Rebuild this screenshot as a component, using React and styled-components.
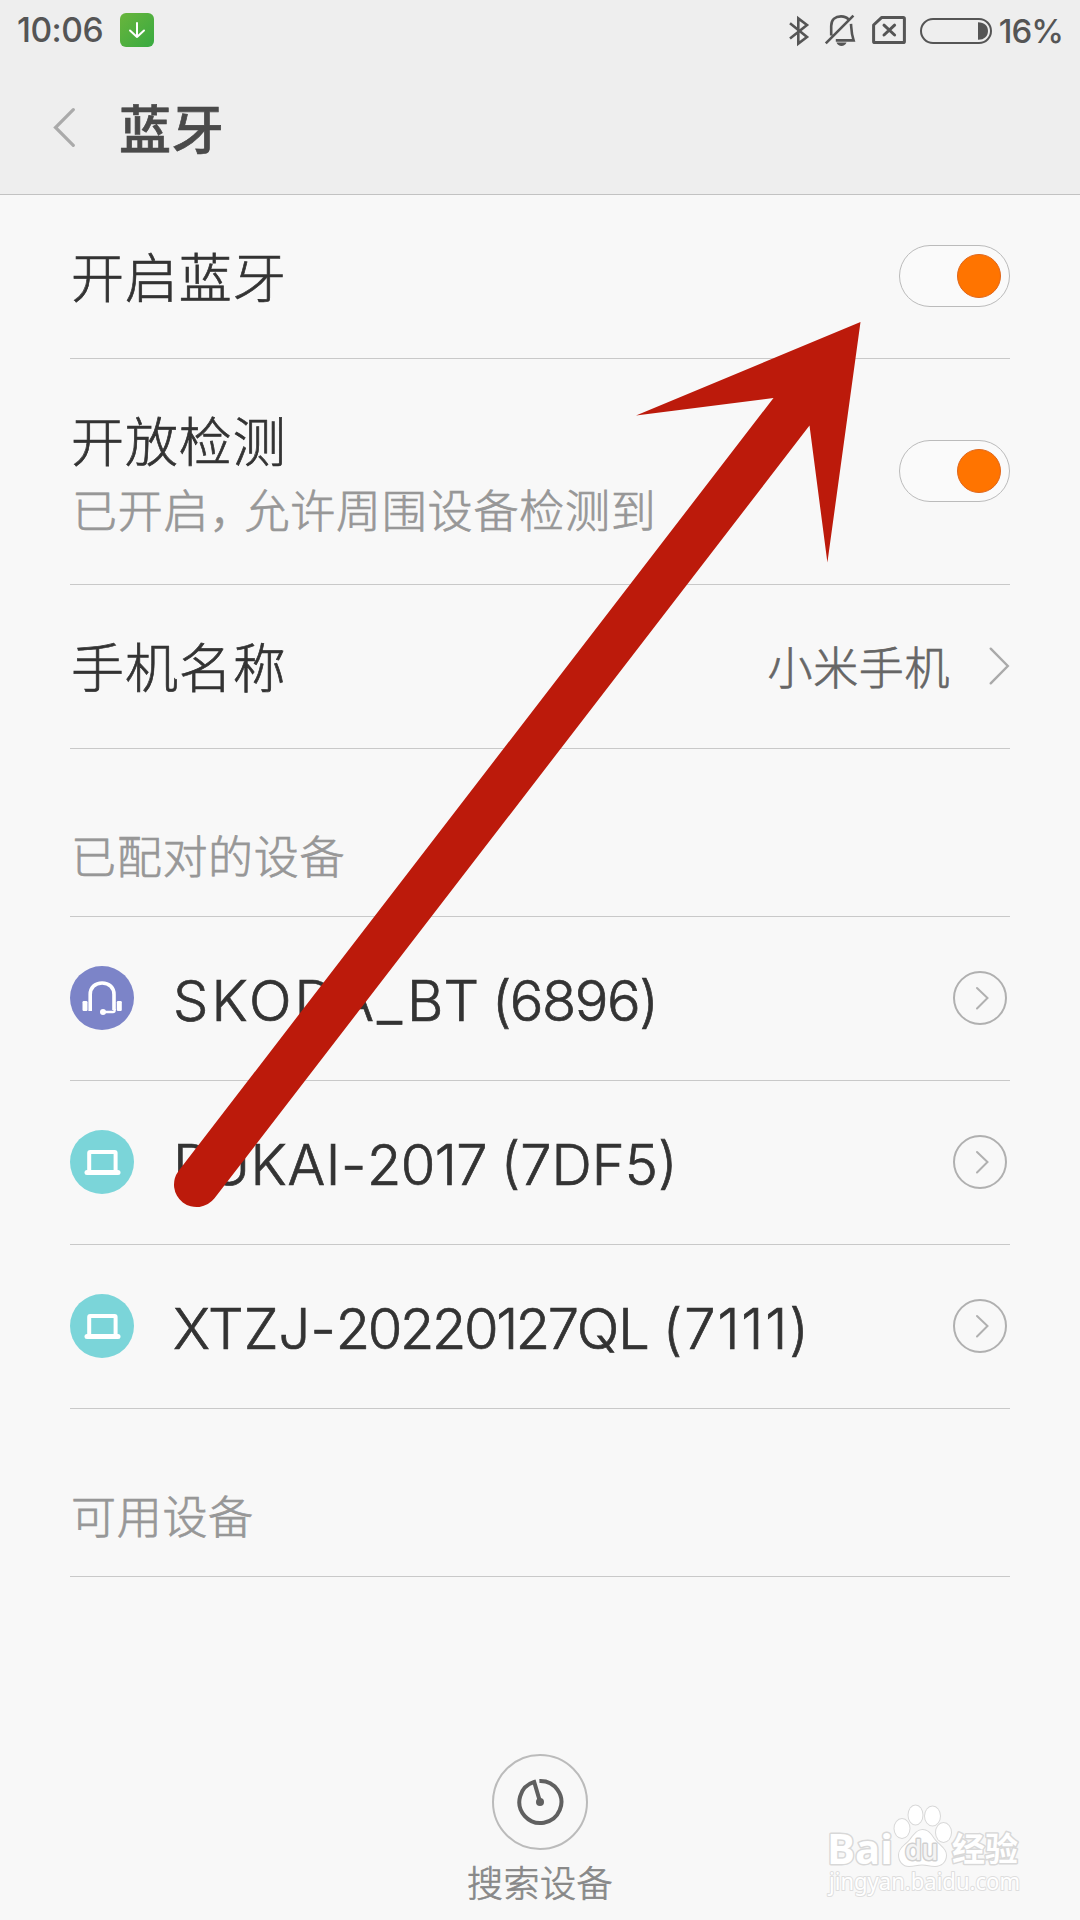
import React from 'react';
import styled, { createGlobalStyle } from 'styled-components';

const cjk = '"Noto Sans CJK SC", sans-serif';
const latin = 'Inter, "Noto Sans CJK SC", sans-serif';

const GlobalStyle = createGlobalStyle`
  * { box-sizing: border-box; }
  body { margin: 0; background: #f8f8f8; }
`;

const Screen = styled.div`
  position: relative;
  display: flex;
  flex-direction: column;
  width: 1080px;
  height: 1920px;
  overflow: hidden;
  background: #f8f8f8;
  font-family: ${cjk};
  font-weight: 300;
  -webkit-text-stroke: 0.7px currentColor;
  color: #333;
`;

const Header = styled.header`
  height: 195px;
  background: #eee;
  border-bottom: 1px solid #c2c2c2;
`;

const StatusBar = styled.div`
  display: flex;
  align-items: center;
  justify-content: space-between;
  height: 60px;
  padding: 0 17px 0 17px;
  font: 500 33.6px/60px ${latin};
  letter-spacing: -0.5px;
  -webkit-text-stroke: 0;
  color: #555;
`;

const StatusGroup = styled.div`
  display: flex;
  align-items: center;
  gap: ${p => p.$gap || 0}px;
`;

const Level = styled.span`
  padding-top: 1px;
  font-weight: 450;
  font-size: 33px;
  letter-spacing: -1px;
`;

const DownloadBadge = styled.span`
  display: flex;
  width: 34px;
  height: 34px;
  border-radius: 6px;
  background: linear-gradient(135deg, #69b53c, #38aa41);
`;

const TitleBar = styled.div`
  display: flex;
  align-items: center;
  height: 135px;
  padding: 0 0 0 53px;
`;

const Title = styled.h1`
  margin: 0 0 2px 44px;
  font-size: 52px;
  font-weight: 500;
  line-height: 76px;
  letter-spacing: 0.7px;
  color: #4a4a4a;
`;

const List = styled.main`
  display: flex;
  flex-direction: column;
  padding: 0 70px;
`;

const Row = styled.div`
  display: flex;
  align-items: center;
  justify-content: space-between;
  height: ${p => p.$h || 164}px;
  padding-bottom: 1px;
  border-bottom: 1px solid #c9c9c9;
`;

const Labels = styled.div`
  display: flex;
  flex-direction: column;
  padding-top: 5px;
`;

const Label = styled.div`
  padding: 0 0 2px 1px;
  font-size: 53px;
  line-height: 68px;
  letter-spacing: 0.9px;
`;

const Hint = styled.div`
  padding-left: 2px;
  font-size: 45px;
  line-height: 67px;
  letter-spacing: 0.8px;
  color: #979797;
`;

const Comma = styled.span`
  display: inline-block;
  width: 35px;
`;

const Section = styled.div`
  height: 168px;
  padding: 73px 0 0 1px;
  border-bottom: 1px solid #c9c9c9;
  font-size: 45px;
  line-height: 66px;
  letter-spacing: 0.7px;
  color: #979797;
`;

const Value = styled.div`
  display: flex;
  align-items: center;
  gap: 39px;
  font-size: 45px;
  line-height: 66px;
  letter-spacing: 0.6px;
  color: #666;
`;

const Switch = styled.div`
  display: flex;
  align-items: center;
  justify-content: flex-end;
  width: 111px;
  height: 62px;
  padding-right: 8px;
  border: 1px solid #bbb;
  border-radius: 31px;
  background: #fafafa;
`;

const Knob = styled.span`
  width: 44px;
  height: 44px;
  border: 1px solid #e0661a;
  border-radius: 50%;
  background: #ff7400;
`;

const Device = styled.div`
  display: flex;
  align-items: center;
  gap: 39px;
`;

const DeviceIcon = styled.span`
  display: flex;
  width: 64px;
  height: 64px;
  border-radius: 50%;
  background: ${p => p.$color};
`;

const DeviceName = styled.span`
  padding-top: 6px;
  font: 300 56px/70px ${latin};
  white-space: pre;
`;

const NamePart = styled.span`
  letter-spacing: ${p => p.$spacing}px;
`;

const DetailButton = styled.span`
  display: flex;
  width: 54px;
  height: 54px;
  margin-right: 3px;
  border: 2px solid #b0b0b0;
  border-radius: 50%;
`;

const SearchButton = styled.div`
  display: flex;
  flex-direction: column;
  align-items: center;
  margin-top: 177px;
  font-size: 36px;
  line-height: 54px;
  letter-spacing: 0.5px;
  color: #888;
`;

const SearchCircle = styled.span`
  display: flex;
  align-items: center;
  justify-content: center;
  width: 96px;
  height: 96px;
  margin-bottom: 4px;
  border: 2px solid #bbb;
  border-radius: 50%;
`;

const Overlay = styled.svg`
  position: absolute;
  left: 0;
  top: 0;
  pointer-events: none;
  -webkit-text-stroke: 0;
`;

const Chevron = ({ w, h, left, color, stroke }) => (
  <svg width={w} height={h} viewBox={`0 0 ${w} ${h}`} fill="none" stroke={color} strokeWidth={stroke} strokeLinecap="round" strokeLinejoin="miter">
    <path d={left
      ? `M${w - 1.7} 1.7L2.5 ${h / 2}L${w - 1.7} ${h - 1.7}`
      : `M1.7 1.7L${w - 2.2} ${h / 2}L1.7 ${h - 1.7}`} />
  </svg>
);

const DownloadIcon = () => (
  <svg width="34" height="34" viewBox="0 0 34 34" fill="none" stroke="#fff" strokeWidth="2" strokeLinecap="round" strokeLinejoin="round">
    <path d="M17 10V24M10 17.5L17 24L24 17.5" />
  </svg>
);

const StatusIcons = () => (
  <svg width="204" height="34" viewBox="788 12 204 34" fill="none" stroke="#555" strokeWidth="2.6">
    <path d="M789 22.3L806 36L797.3 42.6V17.4L806 24L789 37.5" />
    <path d="M830.2 34.5V25C830.2 18.5 834.5 15.4 840 15.4C843.3 15.4 846 16.5 847.6 18.6M850 22.8C850.4 28 850.2 32 852.6 39.4H834.8M824.8 42.4L852.4 14.6" />
    <path d="M835.5 41.6H845.5C844.6 44 842.8 45 840.5 45S836.4 44 835.5 41.6Z" fill="#555" stroke="none" />
    <path d="M880.5 16.6H902.2Q903.4 16.6 903.4 17.8V40.4Q903.4 41.6 902.2 41.6H873.8Q872.6 41.6 872.6 40.4V24Z" strokeWidth="3" strokeLinejoin="round" />
    <path d="M883 24.2L893.6 34M893.6 24.2L883 34" strokeWidth="3" strokeLinecap="round" />
    <rect x="920" y="18" width="70" height="24" rx="12" strokeWidth="2" />
    <path d="M977 21.2C983.5 21.2 987 25 987 30S983.5 38.8 977 38.8Z" fill="#555" stroke="none" />
  </svg>
);

const HeadsetIcon = () => (
  <svg width="64" height="64" viewBox="0 0 64 64" fill="none" stroke="#fff" strokeWidth="3.6">
    <path d="M20.2 45V28.5C20.2 21.5 25 17 32.1 17S44 21.5 44 28.5V44" />
    <path d="M44.6 43V44.6Q44.6 46 43 46H34" strokeWidth="2.4" />
    <rect x="12.5" y="35" width="5" height="10" rx="1.2" fill="#fff" stroke="none" />
    <rect x="46.8" y="35" width="5" height="10" rx="1.2" fill="#fff" stroke="none" />
    <circle cx="33" cy="46" r="3" fill="#fff" stroke="none" />
  </svg>
);

const LaptopIcon = () => (
  <svg width="64" height="64" viewBox="0 0 64 64" fill="none" stroke="#fff">
    <rect x="19.2" y="22" width="26.4" height="20" rx="1" strokeWidth="4" />
    <path d="M17 42.6H48" strokeWidth="5" strokeLinecap="round" />
  </svg>
);

const RadarIcon = () => (
  <svg width="48" height="48" viewBox="0 0 48 48" fill="none" stroke="#606060" strokeWidth="4">
    <path d="M23.4 3A21 21 0 1 1 18.2 3.9L24 23.6" />
    <circle cx="24" cy="24" r="4" fill="#606060" stroke="none" />
  </svg>
);

const devices = [
  { kind: 'headset', parts: [['SKODA_BT', 3.1], [' ', -6], ['(6896)', -1.5]] },
  { kind: 'laptop', parts: [['PUKAI-', 0.6], ['2017', -0.6], [' ', -2], ['(7DF5)', 0]] },
  { kind: 'laptop', parts: [['XTZJ-', 0.1], ['20220127', -2.4], ['QL', -0.9], [' ', -2], ['(7111)', 1.9]] },
];

const Arrow = () => (
  <path
    fill="#bc1a0b"
    d="M860.5 322L636 415.6L773.5 398L178.7 1170.7A22.6 22.6 0 0 0 214.5 1198.3L809.5 425.6L827.4 562.6Z"
  />
);

const Watermark = () => (
  <g fill="#fff" stroke="#d8d8d8" strokeWidth="2" paintOrder="stroke" strokeLinejoin="round">
    <text x="827" y="1864" fontFamily="Open Sans, sans-serif" fontWeight="700" fontSize="42" textLength="66" lengthAdjust="spacingAndGlyphs" strokeWidth="3">Bai</text>
    <ellipse cx="902" cy="1828.5" rx="7.5" ry="9.5" />
    <ellipse cx="915.5" cy="1815" rx="7" ry="9.5" />
    <ellipse cx="932.5" cy="1816" rx="7.5" ry="9.5" />
    <ellipse cx="943.5" cy="1832.5" rx="7.5" ry="9.5" />
    <path d="M922.5 1830C928 1830 931 1834 934 1839C938 1845 946 1848 946 1855C946 1862 941 1866 935 1866C930 1866 927 1864.5 922 1864.5S914 1866 909 1866C903 1866 899 1861 899 1855C899 1848 906 1845 910 1840C914 1835 917 1830 922.5 1830Z" />
    <text x="905" y="1860" fontFamily="Inter, sans-serif" fontWeight="500" fontSize="28" textLength="33" lengthAdjust="spacingAndGlyphs" fill="#f4f4f4" stroke="#d0d0d0" strokeWidth="3">du</text>
    <text x="952" y="1861" fontFamily="Noto Sans CJK SC, sans-serif" fontWeight="700" fontSize="33" strokeWidth="3">经验</text>
    <text x="829" y="1890" fontFamily="Noto Sans, sans-serif" fontWeight="400" fontSize="23" textLength="191" lengthAdjust="spacingAndGlyphs" stroke="#dedede">jingyan.baidu.com</text>
  </g>
);

export default function App() {
  return (
    <Screen>
      <GlobalStyle />
      <Header>
        <StatusBar>
          <StatusGroup $gap={17}>
            <span>10:06</span>
            <DownloadBadge><DownloadIcon /></DownloadBadge>
          </StatusGroup>
          <StatusGroup $gap={6}>
            <StatusIcons />
            <Level>16%</Level>
          </StatusGroup>
        </StatusBar>
        <TitleBar>
          <Chevron left w={22} h={39} color="#aaa" stroke={3.2} />
          <Title>蓝牙</Title>
        </TitleBar>
      </Header>
      <List>
        <Row>
          <Label>开启蓝牙</Label>
          <Switch><Knob /></Switch>
        </Row>
        <Row $h={226}>
          <Labels>
            <Label>开放检测</Label>
            <Hint>已开启<Comma>，</Comma>允许周围设备检测到</Hint>
          </Labels>
          <Switch><Knob /></Switch>
        </Row>
        <Row>
          <Label>手机名称</Label>
          <Value>
            小米手机
            <Chevron w={21} h={38} color="#aaa" stroke={2.4} />
          </Value>
        </Row>
        <Section>已配对的设备</Section>
        {devices.map(d => (
          <Row key={d.parts[0][0]}>
            <Device>
              <DeviceIcon $color={d.kind === 'headset' ? '#7c84c8' : '#7bd5d9'}>
                {d.kind === 'headset' ? <HeadsetIcon /> : <LaptopIcon />}
              </DeviceIcon>
              <DeviceName>
                {d.parts.map(([text, spacing]) => (
                  <NamePart key={text} $spacing={spacing}>{text}</NamePart>
                ))}
              </DeviceName>
            </Device>
            <DetailButton>
              <svg width="50" height="50" viewBox="0 0 50 50" fill="none" stroke="#b0b0b0" strokeWidth="2" strokeLinecap="round">
                <path d="M22 15L32.5 25L22 35.5" />
              </svg>
            </DetailButton>
          </Row>
        ))}
        <Section>可用设备</Section>
      </List>
      <SearchButton>
        <SearchCircle><RadarIcon /></SearchCircle>
        搜索设备
      </SearchButton>
      <Overlay width="1080" height="1920" viewBox="0 0 1080 1920">
        <Arrow />
        <Watermark />
      </Overlay>
    </Screen>
  );
}
